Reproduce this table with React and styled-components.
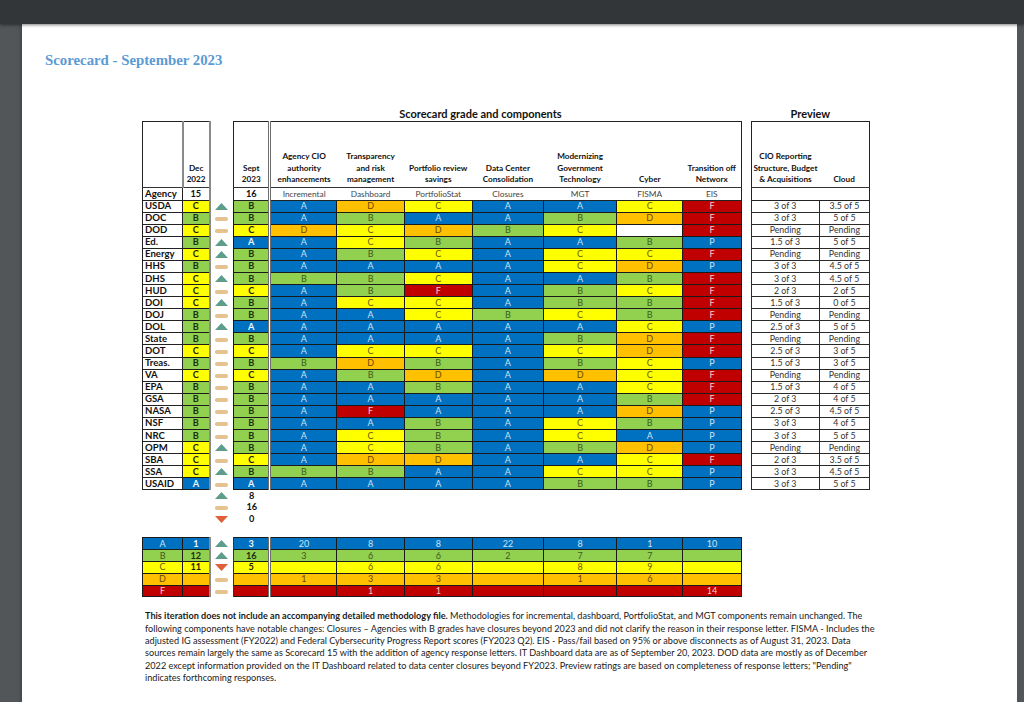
import React from "react";
import styled, { createGlobalStyle } from "styled-components";

const Global = createGlobalStyle`
  html, body { margin: 0; padding: 0; }
  body { background: #525659; font-family: Lato, "Open Sans", sans-serif; }
  #root { width: 1024px; height: 702px; overflow: hidden; }
`;

const BG = { A: "#0070C0", B: "#92D050", C: "#FFFF00", D: "#FFC000", F: "#C00000", P: "#0070C0", "": "#ffffff" };
const FG = { A: "#cfe2f3", B: "#3b5a1d", C: "#6a5d00", D: "#6b4800", F: "#f6cccc", P: "#cfe2f3", "": "#222" };
const FG_STRONG = { A: "#eef5fb", B: "#1f300f", C: "#262200", D: "#2a1d00", F: "#fff", P: "#eef5fb", "": "#222" };

const rows = [
  ["USDA", "C", "up", "B", "A", "D", "C", "A", "A", "C", "F", "3 of 3", "3.5 of 5"],
  ["DOC", "B", "eq", "B", "A", "B", "A", "A", "B", "D", "F", "3 of 3", "5 of 5"],
  ["DOD", "C", "eq", "C", "D", "C", "D", "B", "C", "", "F", "Pending", "Pending"],
  ["Ed.", "B", "up", "A", "A", "C", "B", "A", "A", "B", "P", "1.5 of 3", "5 of 5"],
  ["Energy", "C", "up", "B", "A", "B", "C", "A", "C", "C", "F", "Pending", "Pending"],
  ["HHS", "B", "eq", "B", "A", "A", "A", "A", "C", "D", "P", "3 of 3", "4.5 of 5"],
  ["DHS", "C", "up", "B", "B", "B", "C", "A", "A", "B", "F", "3 of 3", "4.5 of 5"],
  ["HUD", "C", "eq", "C", "A", "B", "F", "A", "B", "C", "F", "2 of 3", "2 of 5"],
  ["DOI", "C", "up", "B", "A", "C", "C", "A", "B", "B", "F", "1.5 of 3", "0 of 5"],
  ["DOJ", "B", "eq", "B", "A", "A", "C", "B", "C", "B", "F", "Pending", "Pending"],
  ["DOL", "B", "up", "A", "A", "A", "A", "A", "A", "C", "P", "2.5 of 3", "5 of 5"],
  ["State", "B", "eq", "B", "A", "A", "A", "A", "B", "D", "F", "Pending", "Pending"],
  ["DOT", "C", "eq", "C", "A", "C", "C", "A", "C", "D", "F", "2.5 of 3", "3 of 5"],
  ["Treas.", "B", "eq", "B", "B", "D", "B", "A", "B", "C", "P", "1.5 of 3", "3 of 5"],
  ["VA", "C", "eq", "C", "A", "B", "D", "A", "D", "C", "F", "Pending", "Pending"],
  ["EPA", "B", "eq", "B", "A", "A", "B", "A", "A", "C", "F", "1.5 of 3", "4 of 5"],
  ["GSA", "B", "eq", "B", "A", "A", "A", "A", "A", "B", "F", "2 of 3", "4 of 5"],
  ["NASA", "B", "eq", "B", "A", "F", "A", "A", "A", "D", "P", "2.5 of 3", "4.5 of 5"],
  ["NSF", "B", "eq", "B", "A", "A", "B", "A", "C", "B", "P", "3 of 3", "4 of 5"],
  ["NRC", "B", "eq", "B", "A", "C", "B", "A", "C", "A", "P", "3 of 3", "5 of 5"],
  ["OPM", "C", "up", "B", "A", "C", "B", "A", "B", "D", "P", "Pending", "Pending"],
  ["SBA", "C", "eq", "C", "A", "D", "D", "A", "A", "C", "F", "2 of 3", "3.5 of 5"],
  ["SSA", "C", "up", "B", "B", "B", "A", "A", "C", "C", "P", "3 of 3", "4.5 of 5"],
  ["USAID", "A", "eq", "A", "A", "A", "A", "A", "B", "B", "P", "3 of 3", "5 of 5"],
];

const summary = [
  ["A", "1", "up", "3", ["20", "8", "8", "22", "8", "1", "10"]],
  ["B", "12", "up", "16", ["3", "6", "6", "2", "7", "7", ""]],
  ["C", "11", "down", "5", ["", "6", "6", "", "8", "9", ""]],
  ["D", "", "eq", "", ["1", "3", "3", "", "1", "6", ""]],
  ["F", "", "eq", "", ["", "1", "1", "", "", "", "14"]],
];

const headers = [
  ["Agency CIO", "authority", "enhancements"],
  ["Transparency", "and risk", "management"],
  ["Portfolio review", "savings"],
  ["Data Center", "Consolidation"],
  ["Modernizing", "Government", "Technology"],
  ["Cyber"],
  ["Transition off", "Networx"],
];
const sources = ["Incremental", "Dashboard", "PortfolioStat", "Closures", "MGT", "FISMA", "EIS"];
const widths = [40, 27, 24, 36, 67, 67, 68, 71, 73, 66, 58, 10, 68, 50];

const Viewer = styled.div`
  display: flex;
  flex-direction: column;
  width: 1024px;
  height: 702px;
  background: #525659;
`;
const TopBar = styled.div`
  height: 24px;
  flex: none;
  background: #323639;
  box-shadow: 0 1px 3px rgba(0, 0, 0, 0.5);
  position: relative;
  z-index: 1;
`;
const Stage = styled.div`
  flex: 1;
  display: flex;
  min-height: 0;
`;
const Gutter = styled.div`
  flex: none;
  width: ${(p) => p.$w}px;
  background: #525659;
`;
const Page = styled.div`
  flex: 1;
  background: #ffffff;
  box-shadow: 0 0 4px rgba(0, 0, 0, 0.4);
  padding: 27px 0 0 23px;
`;
const Title = styled.h1`
  margin: 0;
  font-family: "Liberation Serif", serif;
  font-weight: bold;
  font-size: 14.8px;
  line-height: 18px;
  color: #5b9bd5;
`;
const Table = styled.table`
  margin: 38px 0 0 97px;
  border-collapse: collapse;
  table-layout: fixed;
  width: 728px;
  font-family: Lato, sans-serif;
  color: #222;
`;
const Row = styled.tr`
  height: ${(p) => p.$h || 12}px;
`;
const Td = styled.td`
  padding: 0;
  border: none;
  text-align: center;
  vertical-align: middle;
  line-height: 10px;
  white-space: nowrap;
  overflow: hidden;
`;
const GroupTitle = styled(Td)`
  font-weight: bold;
  font-size: 11px;
  line-height: 13px;
  color: #111;
  padding-right: ${(p) => p.$pr || 0}px;
`;
const HeadCell = styled(Td)`
  vertical-align: bottom;
  font-weight: bold;
  font-size: 8.2px;
  line-height: 11.5px;
  padding-bottom: 1px;
  color: #111;
  border-top: 1px solid #222;
  border-bottom: 1px solid #333;
  border-left: ${(p) => (p.$l ? "1px solid #222" : "none")};
  border-right: ${(p) => p.$r || "none"};
`;
const Line = styled.div``;
const LabelCell = styled(Td)`
  font-size: ${(p) => (p.$strong ? 9.2 : 8.3)}px;
  font-weight: ${(p) => (p.$strong ? "bold" : "normal")};
  color: ${(p) => (p.$strong ? "#111" : "#444")};
  border-bottom: 1px solid #222;
  border-left: ${(p) => (p.$l ? "1px solid #222" : "none")};
  border-right: ${(p) => p.$r || "none"};
`;
const AgencyCell = styled(Td)`
  text-align: left;
  padding-left: 2px;
  font-weight: bold;
  font-size: 9.6px;
  color: #111;
  background: #fff;
  border: 1px solid #222;
`;
const GradeCell = styled(Td)`
  background: ${(p) => BG[p.$g]};
  color: ${(p) => (p.$strong ? FG_STRONG[p.$g] : FG[p.$g])};
  font-weight: ${(p) => (p.$strong ? "bold" : "normal")};
  font-size: ${(p) => (p.$strong ? 9.2 : 9)}px;
  border: 1px solid #1a1a1a;
  border-right: ${(p) => p.$r || "1px solid #1a1a1a"};
`;
const ArrowCell = styled(Td)`
  background: #fff;
  line-height: 0;
  border-left: ${(p) => (p.$boxed ? "2px solid #8a8a8a" : "none")};
  border-right: ${(p) => (p.$boxed ? "1px solid #333" : "none")};
`;
const CountCell = styled(Td)`
  font-weight: bold;
  font-size: 9.2px;
  color: #111;
`;
const PreviewCell = styled(Td)`
  background: #fff;
  font-size: 8.8px;
  color: #333;
  border: 1px solid #2a2a2a;
`;
const Notes = styled.div`
  margin: 13px 0 0 100px;
  font-family: Lato, sans-serif;
  font-size: 9.15px;
  line-height: 12.35px;
  color: #1a1a1a;
`;
const NoteLine = styled.div`
  white-space: nowrap;
`;

const SEPT_R = "3px double #6d6d6d";
const DEC_R = "2px solid #8a8a8a";

function Arrow({ kind }) {
  if (kind === "up")
    return (
      <svg width="13" height="7" viewBox="0 0 13 7">
        <polygon points="0,7 6.5,0 13,7" fill="#5e9d8c" />
      </svg>
    );
  if (kind === "down")
    return (
      <svg width="13" height="7" viewBox="0 0 13 7">
        <polygon points="0,0 13,0 6.5,7" fill="#df5f3b" />
      </svg>
    );
  return (
    <svg width="13" height="4" viewBox="0 0 13 4">
      <rect x="0" y="0" width="13" height="4" rx="1.8" fill="#e4c390" />
    </svg>
  );
}

export default function App() {
  return (
    <>
      <Global />
      <Viewer>
        <TopBar />
        <Stage>
          <Gutter $w={22} />
          <Page>
            <Title>Scorecard - September 2023</Title>
            <Table>
              <colgroup>
                {widths.map((w, i) => (
                  <col key={i} style={{ width: w }} />
                ))}
              </colgroup>
              <tbody>
                <Row $h={14}>
                  <Td colSpan={3} />
                  <GroupTitle colSpan={8} $pr={14}>
                    Scorecard grade and components
                  </GroupTitle>
                  <Td />
                  <GroupTitle colSpan={2}>Preview</GroupTitle>
                </Row>
                <Row $h={66}>
                  <HeadCell $l $r={DEC_R} />
                  <HeadCell $r={DEC_R}>
                    <Line>Dec</Line>
                    <Line>2022</Line>
                  </HeadCell>
                  <Td />
                  <HeadCell $l $r={SEPT_R}>
                    <Line>Sept</Line>
                    <Line>2023</Line>
                  </HeadCell>
                  {headers.map((h, i) => (
                    <HeadCell key={i} $r={i === 6 ? "1px solid #222" : undefined}>
                      {h.map((t) => (
                        <Line key={t}>{t}</Line>
                      ))}
                    </HeadCell>
                  ))}
                  <Td />
                  <HeadCell $l>
                    <Line>CIO Reporting</Line>
                    <Line>Structure, Budget</Line>
                    <Line>&amp; Acquisitions</Line>
                  </HeadCell>
                  <HeadCell $r="1px solid #222">
                    <Line>Cloud</Line>
                  </HeadCell>
                </Row>
                <Row $h={13}>
                  <AgencyCell>Agency</AgencyCell>
                  <LabelCell $strong $l $r={DEC_R}>
                    15
                  </LabelCell>
                  <Td />
                  <LabelCell $strong $l $r={SEPT_R}>
                    16
                  </LabelCell>
                  {sources.map((s, i) => (
                    <LabelCell key={s} $r={i === 6 ? "1px solid #222" : undefined}>
                      {s}
                    </LabelCell>
                  ))}
                  <Td />
                  <LabelCell $l />
                  <LabelCell $r="1px solid #222" />
                </Row>
                {rows.map((r) => (
                  <Row key={r[0]} $h={12.08}>
                    <AgencyCell>{r[0]}</AgencyCell>
                    <GradeCell $g={r[1]} $strong $r={DEC_R}>
                      {r[1]}
                    </GradeCell>
                    <ArrowCell>
                      <Arrow kind={r[2]} />
                    </ArrowCell>
                    <GradeCell $g={r[3]} $strong $r={SEPT_R}>
                      {r[3]}
                    </GradeCell>
                    {r.slice(4, 11).map((g, i) => (
                      <GradeCell key={i} $g={g}>
                        {g}
                      </GradeCell>
                    ))}
                    <Td />
                    <PreviewCell>{r[11]}</PreviewCell>
                    <PreviewCell>{r[12]}</PreviewCell>
                  </Row>
                ))}
                {[
                  ["up", "8"],
                  ["eq", "16"],
                  ["down", "0"],
                ].map(([k, n]) => (
                  <Row key={k} $h={11.7}>
                    <Td colSpan={2} />
                    <ArrowCell>
                      <Arrow kind={k} />
                    </ArrowCell>
                    <CountCell>{n}</CountCell>
                    <Td colSpan={10} />
                  </Row>
                ))}
                <Row $h={13}>
                  <Td colSpan={14} />
                </Row>
                {summary.map(([g, dec, k, sept, comps]) => (
                  <Row key={g} $h={11.8}>
                    <GradeCell $g={g}>{g}</GradeCell>
                    <GradeCell $g={g} $strong $r={DEC_R}>
                      {dec}
                    </GradeCell>
                    <ArrowCell $boxed>
                      <Arrow kind={k} />
                    </ArrowCell>
                    <GradeCell $g={g} $strong $r={SEPT_R}>
                      {sept}
                    </GradeCell>
                    {comps.map((c, i) => (
                      <GradeCell key={i} $g={g}>
                        {c}
                      </GradeCell>
                    ))}
                    <Td colSpan={3} />
                  </Row>
                ))}
              </tbody>
            </Table>
            <Notes>
              <NoteLine>
                <b>This iteration does not include an accompanying detailed methodology file.</b> Methodologies for
                incremental, dashboard, PortfolioStat, and MGT components remain unchanged. The
              </NoteLine>
              <NoteLine>
                following components have notable changes: Closures – Agencies with B grades have closures beyond 2023
                and did not clarify the reason in their response letter. FISMA - Includes the
              </NoteLine>
              <NoteLine>
                adjusted IG assessment (FY2022) and Federal Cybersecurity Progress Report scores (FY2023 Q2). EIS -
                Pass/fail based on 95% or above disconnects as of August 31, 2023. Data
              </NoteLine>
              <NoteLine>
                sources remain largely the same as Scorecard 15 with the addition of agency response letters. IT
                Dashboard data are as of September 20, 2023. DOD data are mostly as of December
              </NoteLine>
              <NoteLine>
                2022 except information provided on the IT Dashboard related to data center closures beyond FY2023.
                Preview ratings are based on completeness of response letters; "Pending"
              </NoteLine>
              <NoteLine>indicates forthcoming responses.</NoteLine>
            </Notes>
          </Page>
          <Gutter $w={7} />
        </Stage>
      </Viewer>
    </>
  );
}
